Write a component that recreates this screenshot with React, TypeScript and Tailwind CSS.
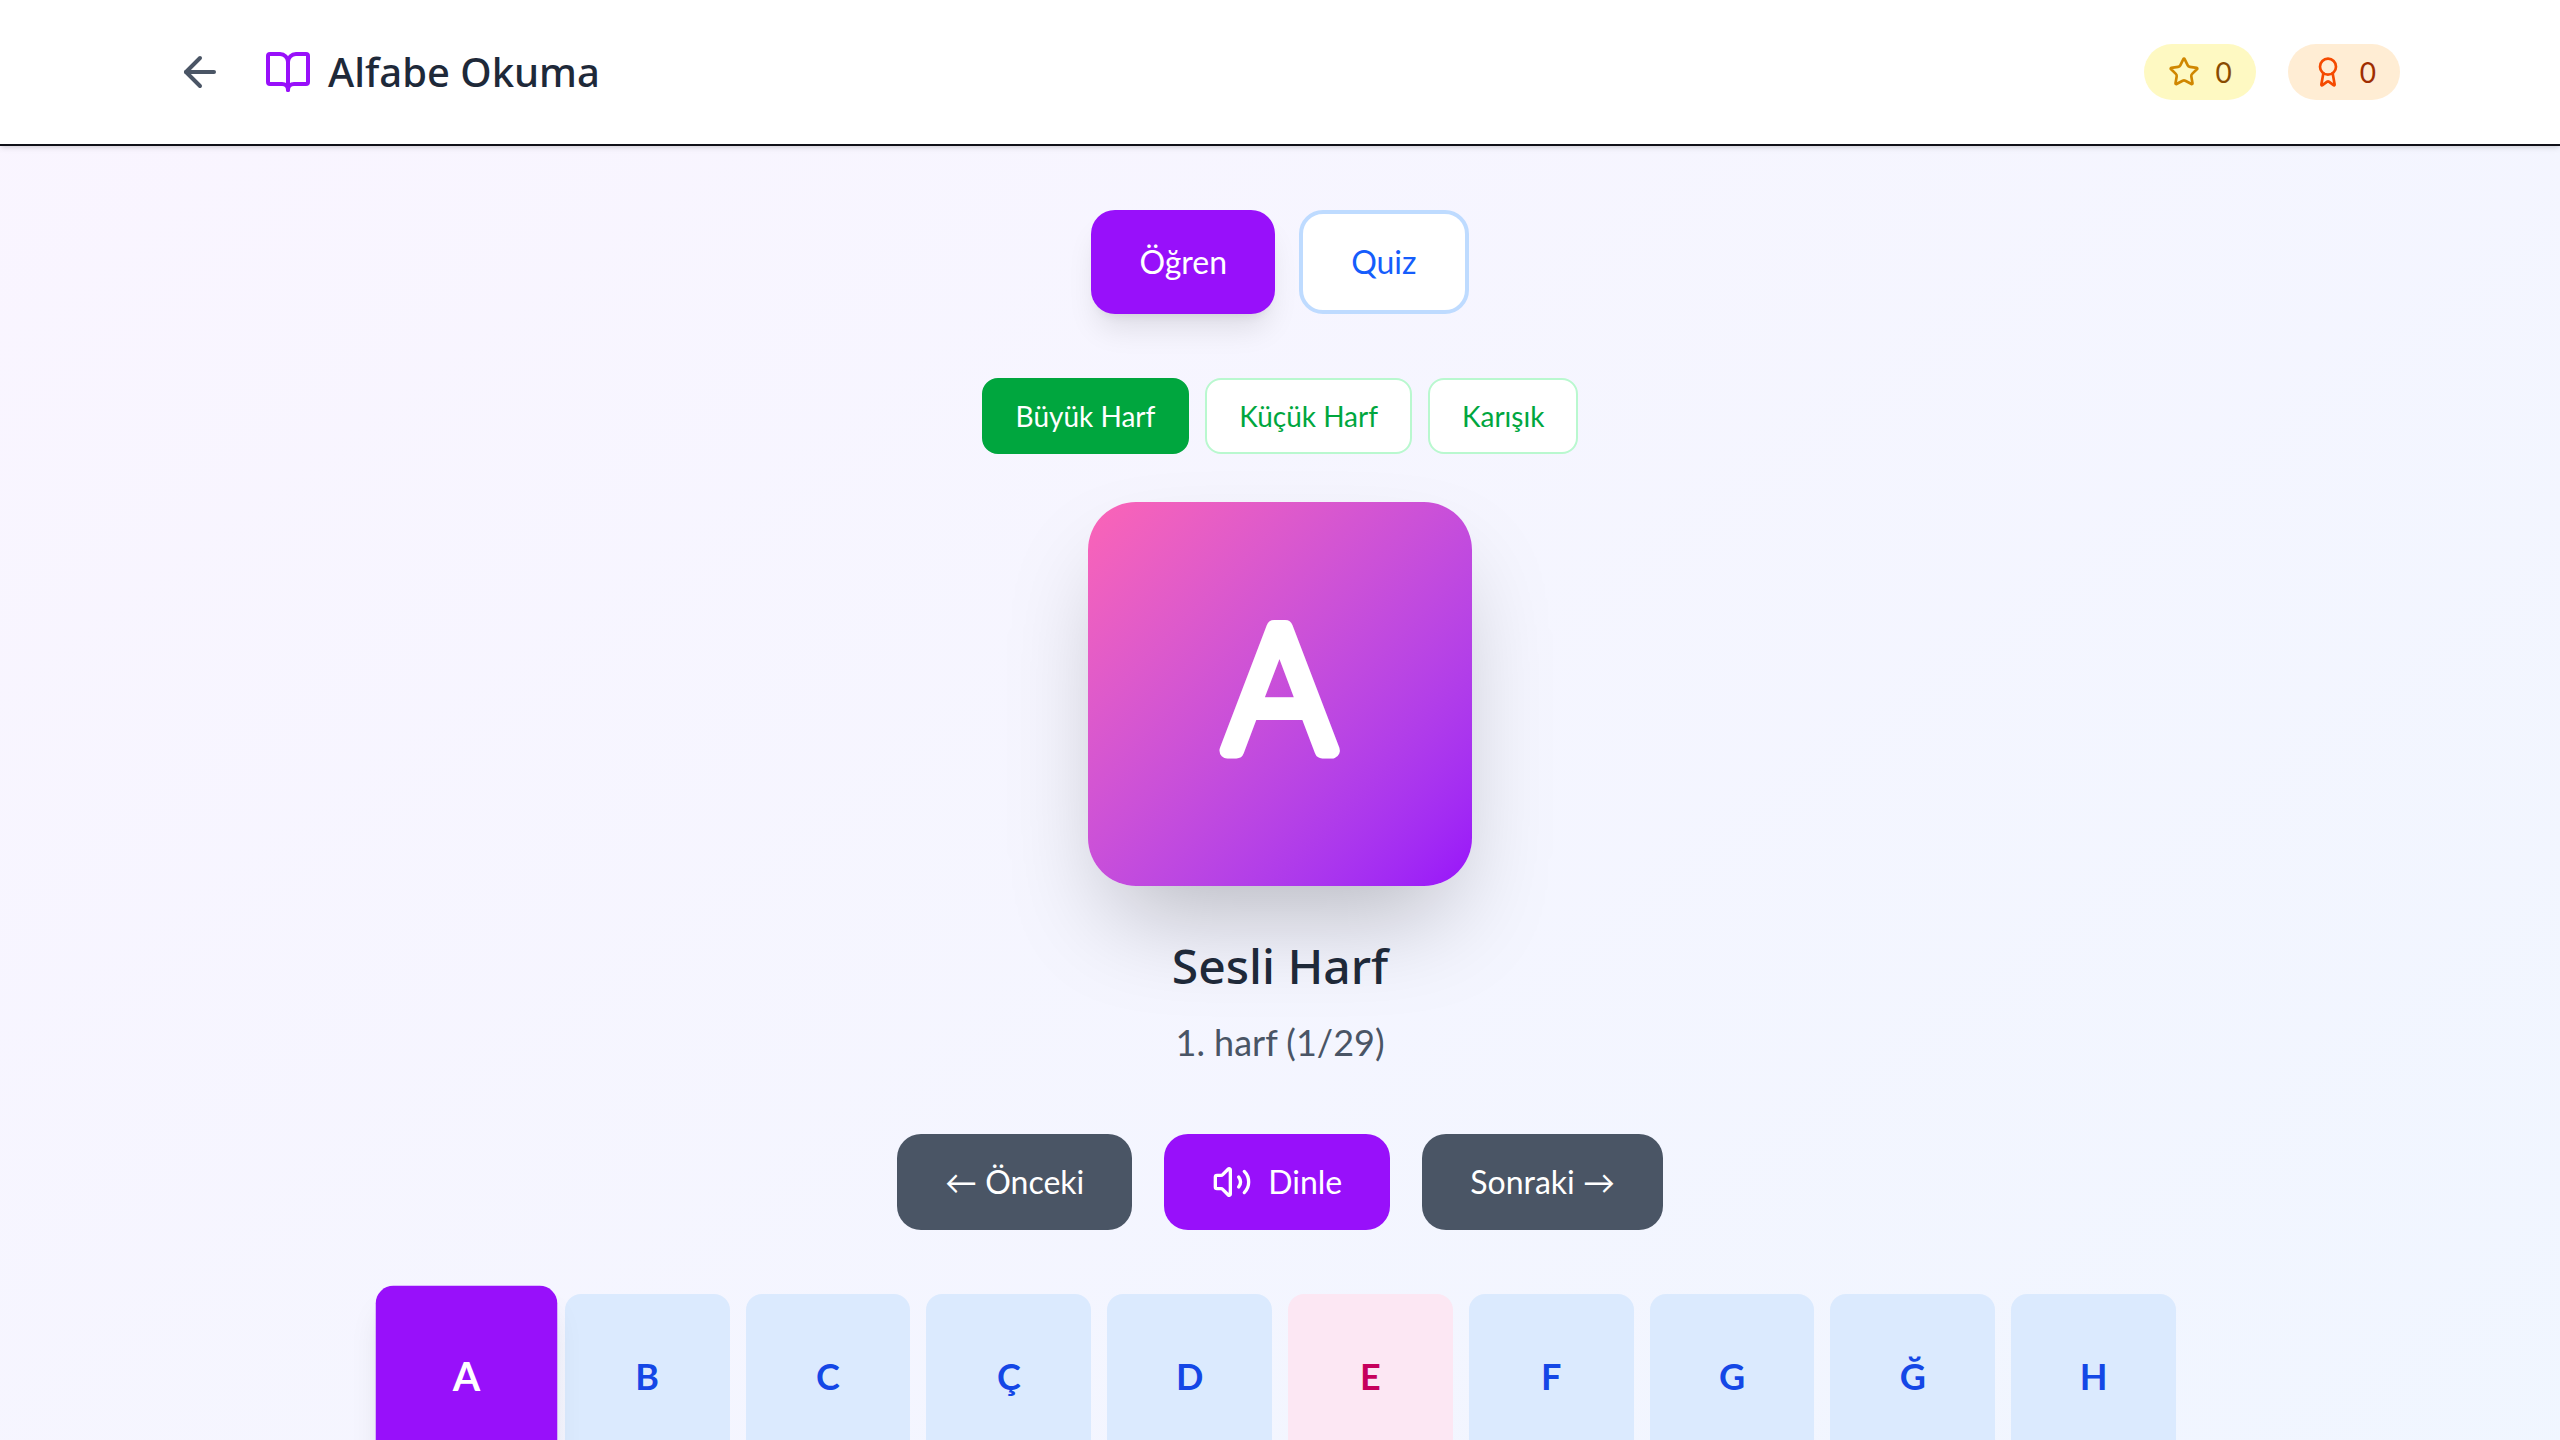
import React, { useState } from 'react';
import { ArrowLeft, Award, BookOpen, Star, Volume2 } from 'lucide-react';

const LETTERS = 'A B C Ç D E F G Ğ H I İ J K L M N O Ö P R S Ş T U Ü V Y Z'.split(' ');
const VOWELS = 'A E I İ O Ö U Ü'.split(' ');
const CASES = ['Büyük Harf', 'Küçük Harf', 'Karışık'];

function Header() {
  return (
    <header className="border-b-2 border-[#101018] bg-white shadow-[0_2px_6px_rgba(0,0,0,0.1),0_2px_4px_-2px_rgba(0,0,0,0.1)]">
      <div className="mx-auto flex max-w-[2304px] items-center justify-between p-8">
        <div className="flex items-center gap-6">
          <button type="button" aria-label="Geri" className="rounded-2xl p-4 text-gray-600">
            <ArrowLeft className="size-12" />
          </button>
          <div className="flex items-center gap-4">
            <BookOpen className="size-12 text-purple-600" />
            <h1 className="font-['Noto_Sans',sans-serif] text-[40px] leading-[56px] font-medium text-gray-800">
              Alfabe Okuma
            </h1>
          </div>
        </div>
        <div className="flex items-center gap-8 text-[28px] leading-10">
          <div className="flex items-center gap-4 rounded-full bg-yellow-100 px-6 py-2">
            <Star className="size-8 text-yellow-600" />
            <span className="text-yellow-800">0</span>
          </div>
          <div className="flex items-center gap-4 rounded-full bg-orange-100 px-6 py-2">
            <Award className="size-8 text-orange-600" />
            <span className="text-orange-800">0</span>
          </div>
        </div>
      </div>
    </header>
  );
}

function LetterTile({ letter, active, onSelect }: { letter: string; active: boolean; onSelect: () => void }) {
  const tone = active
    ? 'scale-110 bg-purple-600 text-white shadow-[0_20px_30px_-6px_rgba(0,0,0,0.1),0_8px_12px_-8px_rgba(0,0,0,0.1)]'
    : VOWELS.includes(letter)
      ? 'bg-pink-100 text-pink-700'
      : 'bg-blue-100 text-blue-700';
  return (
    <button
      type="button"
      onClick={onSelect}
      className={`flex aspect-square items-center justify-center rounded-2xl text-4xl font-bold ${tone}`}
    >
      {letter}
    </button>
  );
}

/* Big letter with rounded stroke ends. */
function LetterCard({ letter }: { letter: string }) {
  return (
    <div className="mb-12 size-96 rounded-[48px] bg-gradient-to-br from-pink-400 to-purple-600 shadow-[0_50px_100px_-24px_rgba(0,0,0,0.25)]">
      <svg viewBox="0 0 384 384" className="size-full" role="img" aria-label={letter}>
        <text
          x="192"
          y="248"
          textAnchor="middle"
          className="fill-white stroke-white stroke-[16px] font-['DejaVu_Sans',sans-serif] text-[168px] font-extralight"
          strokeLinejoin="round"
        >
          {letter}
        </text>
      </svg>
    </div>
  );
}

export default function App() {
  const [index, setIndex] = useState(0);
  const [letterCase, setLetterCase] = useState(CASES[0]);
  const letter = LETTERS[index];
  const shown = letterCase === 'Küçük Harf' ? letter.toLocaleLowerCase('tr') : letter;
  const step = (by: number) => setIndex((index + by + LETTERS.length) % LETTERS.length);

  return (
    <div className="h-screen overflow-y-auto font-['Lato','Noto_Sans',sans-serif] [scrollbar-width:none]">
      <div className="min-h-full bg-gradient-to-br from-purple-50 to-blue-50">
        <Header />
        <main className="mx-auto flex max-w-[1792px] flex-col items-center py-16">
          <div className="mb-16 flex gap-6 text-[32px] leading-[48px]">
            <button
              type="button"
              className="rounded-3xl bg-purple-600 px-12 py-6 text-white shadow-[0_20px_30px_-6px_rgba(0,0,0,0.1),0_8px_12px_-8px_rgba(0,0,0,0.1)]"
            >
              Öğren
            </button>
            <button type="button" className="rounded-3xl border-4 border-blue-200 bg-white px-12 py-6 text-blue-600">
              Quiz
            </button>
          </div>

          <div className="mb-12 flex gap-4 text-[28px] leading-10">
            {CASES.map((name) => (
              <button
                key={name}
                type="button"
                onClick={() => setLetterCase(name)}
                className={`rounded-2xl border-2 px-8 py-4 ${
                  name === letterCase
                    ? 'border-green-600 bg-green-600 text-white'
                    : 'border-green-200 bg-white text-green-600'
                }`}
              >
                {name}
              </button>
            ))}
          </div>

          <LetterCard letter={shown} />

          <h2 className="mb-4 font-['Noto_Sans',sans-serif] text-5xl leading-[64px] font-medium text-gray-800">
            {VOWELS.includes(letter) ? 'Sesli Harf' : 'Sessiz Harf'}
          </h2>
          <p className="mb-16 text-4xl leading-[56px] text-gray-600">
            {index + 1}. harf ({index + 1}/{LETTERS.length})
          </p>

          <div className="mb-16 flex gap-8 text-[32px] leading-[48px] text-white">
            <button type="button" onClick={() => step(-1)} className="rounded-3xl bg-gray-600 px-12 py-6">
              ← Önceki
            </button>
            <button type="button" className="flex items-center gap-4 rounded-3xl bg-purple-600 px-12 py-6">
              <Volume2 className="size-10" />
              Dinle
            </button>
            <button type="button" onClick={() => step(1)} className="rounded-3xl bg-gray-600 px-12 py-6">
              Sonraki →
            </button>
          </div>

          <div className="grid w-full grid-cols-10 gap-4">
            {LETTERS.map((item, i) => (
              <LetterTile key={item} letter={item} active={i === index} onSelect={() => setIndex(i)} />
            ))}
          </div>
        </main>
      </div>
    </div>
  );
}
